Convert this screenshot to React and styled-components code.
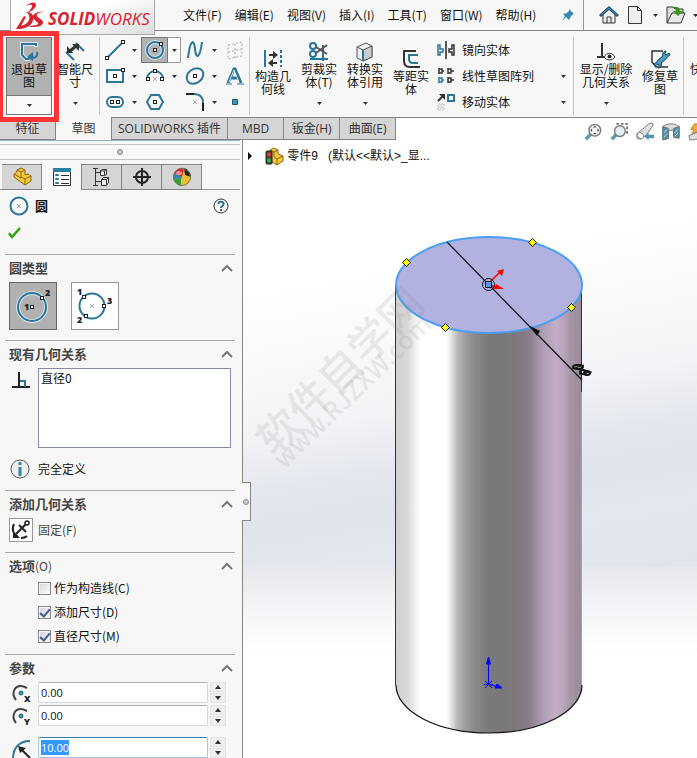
import { useEffect, useRef } from "react";
import styled, { createGlobalStyle, css } from "styled-components";

const GlobalStyle = createGlobalStyle`
    * { box-sizing: border-box; }
    body {
        margin: 0;
        overflow: hidden;
        background: #fff;
        color: #111;
        font: 12px/16px "Noto Sans CJK SC", sans-serif;
    }
    button, input, select { font: inherit; color: inherit; }
    button { padding: 0; border: 0; background: none; }
    svg { display: block; flex: none; overflow: visible; }
    ::selection { background: #3399ff; color: #fff; }
`

const BLUE = "#2b7599";
const DARK = "#333";

/* ---------- shell ---------- */

const Page = styled.div`
    position: relative;
    display: flex;
    flex-direction: column;
    height: 100vh;
    overflow: hidden;
`

const MenuBar = styled.header`
    display: flex;
    flex: none;
    align-items: center;
    height: 31px;
    padding-left: 10px;
    background: #f7f7f7;
    border-bottom: 1px solid #858585;
`

const Logo = styled.div`
    position: relative;
    z-index: 2;
    display: flex;
    flex: none;
    align-self: flex-start;
    align-items: center;
    width: 145px;
    height: 35px;
    padding: 0 0 2px 5px;
    color: #d9232e;
    font: italic 400 17px/24px "Open Sans", sans-serif;
    background: linear-gradient(160deg, #fff 45%, #dcdcdc);
    border: 1px solid #aaa;
    border-top: 0;

    b { font-weight: 700; }
    span { padding-top: 5px; }
`

const Menus = styled.nav`
    display: flex;
    flex: 1;
    gap: 13px;
    padding-left: 28px;
    white-space: nowrap;
`

const QuickTools = styled.div`
    display: flex;
    flex: none;
    align-items: center;
    width: 138px;
    height: 30px;
`

const QuickDivider = styled.div`
    width: 3px;
    height: 30px;
    margin: 0 15px 0 6px;
    background: #d0d0d0;
    border-left: 1px solid #999;
`

const QuickButton = styled.button`
    display: grid;
    flex: none;
    place-items: center;
    width: ${p => p.$width}px;
    height: 24px;
`

/* ---------- ribbon ---------- */

const Ribbon = styled.section`
    display: flex;
    flex: none;
    height: 86px;
    padding: 6px 0 2px 6px;
    background: #f7f7f7;
`

const Separator = styled.div`
    flex: none;
    width: 1px;
    margin: 0 ${p => p.$after || 0}px 0 1px;
    background: #c4c4c4;
`

const BigButton = styled.button`
    display: flex;
    flex: none;
    flex-direction: column;
    align-items: center;
    width: ${p => p.$width || 46}px;
    height: 78px;
    padding-top: ${p => (p.$menu ? 5 : 12)}px;
    line-height: 13px;
    white-space: nowrap;

    svg:last-child { margin-top: ${p => (p.$menu ? 14 : 0)}px; }
`

const ExitGroup = styled.div`
    display: flex;
    flex: none;
    flex-direction: column;
    width: 46px;
    height: 78px;
    border: 1px solid #777;
`

const ExitButton = styled.button`
    display: flex;
    flex-direction: column;
    align-items: center;
    height: 57px;
    padding-top: 4px;
    line-height: 13px;
    background: #b1b1b1;
`

const ExitMenu = styled.button`
    display: grid;
    flex: 1;
    place-items: center;
    background: #f9f9f9;
    border-top: 1px solid #777;
`

const ToolGrid = styled.div`
    display: grid;
    flex: none;
    grid-template-columns: 40px 40px 40px 27px;
    grid-auto-rows: 26px;
    padding-left: 1px;
`

const ToolCell = styled.div`
    display: flex;
    ${p => p.$active && css`
        button:first-child { background: #b1b1b1; border: 1px solid #777; }
        button:last-child { background: #fff; border: 1px solid #999; border-left: 0; }
    `}
`

const ToolButton = styled.button`
    display: grid;
    place-items: center;
    width: ${p => (p.$caret ? 13 : 27)}px;
    height: 26px;
`

const SideList = styled.div`
    flex: none;
    width: 138px;
`

const SideRow = styled.div`
    display: flex;
    align-items: center;
    height: 26px;

    button:first-child {
        display: flex;
        flex: 1;
        gap: 7px;
        align-items: center;
        padding-left: 3px;
        white-space: nowrap;
    }
    button:last-child:not(:first-child) { padding: 4px 6px; }
`

/* frame that calls out the exit-sketch command */
const Highlight = styled.div`
    position: absolute;
    z-index: 3;
    top: 31px;
    left: -2px;
    width: 61px;
    height: 91px;
    border: 5px solid #ff3434;
    pointer-events: none;
`

const TabStrip = styled.div`
    display: flex;
    flex: none;
    height: 23px;
`

const Tab = styled.button`
    flex: none;
    min-width: 56px;
    padding: 0 6px;
    color: #333;
    font-family: "Open Sans", "Noto Sans CJK SC", sans-serif;
    background: ${p => (p.$active ? "#f7f7f7" : "#d5d5d5")};
    border: solid #858585;
    border-width: ${p => (p.$active ? "0 1px 0 0" : "1px 1px 1px 0")};
`

const StripRest = styled.div`
    flex: 1;
    border-top: 1px solid #858585;
`

/* ---------- property panel ---------- */

const Body = styled.main`
    display: flex;
    flex: 1;
    min-height: 0;
`

const Panel = styled.aside`
    position: relative;
    z-index: 1;
    flex: none;
    width: 243px;
    background: #f7f7f7;
    border-right: 1px solid #858585;
`

const PanelGrip = styled.div`
    display: grid;
    place-items: center;
    height: 20px;
    margin-right: 2px;
    padding-top: 4px;
    border-top: 1px solid #8fb0bd;
    border-bottom: 1px solid #c4c4c4;
    background: linear-gradient(#c4c4c4, #c4c4c4) 0 3px / 100% 1px no-repeat;
`

const Knob = styled.i`
    width: 6px;
    height: 6px;
    background: #ccc;
    border: 1px solid #888;
    border-radius: 50%;
`

const SideHandle = styled.button`
    position: absolute;
    top: 342px;
    right: -9px;
    display: grid;
    place-items: center;
    width: 9px;
    height: 39px;
    background: #f7f7f7;
    border: 1px solid #858585;
    border-left: 0;
`

const PanelTabs = styled.div`
    display: flex;
    height: 26px;
    margin: 4px 2px 0 0;
    padding-left: 2px;
    background: linear-gradient(#999, #999) 0 100% / 100% 1px no-repeat;
`

const PanelTab = styled.button`
    display: grid;
    place-items: center;
    width: 40px;
    background: ${p => (p.$active ? "#f7f7f7" : "#d5d5d5")};
    border: solid #858585;
    border-width: ${p => (p.$active ? "0 1px 0 0" : "1px 1px 1px 0")};
`

const TitleRow = styled.div`
    display: flex;
    align-items: center;
    gap: 6px;
    height: 32px;
    padding: 0 13px 0 9px;

    h1 { flex: 1; margin: 0; font-size: 13px; font-weight: 700; }
`

const ConfirmRow = styled.div`
    height: 32px;
    padding: 4px 7px;
`

const Block = styled.section`
    margin: 0 7px 0 5px;
    padding: 0 2px 10px 4px;
    border-top: 1px solid #aaa;
`

const BlockHead = styled.div`
    display: flex;
    align-items: center;
    justify-content: space-between;
    height: 27px;
    padding-bottom: 2px;

    h2 { margin: 0; color: #444; font-size: 13px; font-weight: 700; }
    small { font-size: 12px; font-weight: 400; }
`

const TypeRow = styled.div`
    display: flex;
    gap: 14px;
`

const TypeButton = styled.button`
    display: grid;
    place-items: center;
    width: 48px;
    height: 48px;
    background: ${p => (p.$active ? "#b1b1b1" : "#fff")};
    border: 1px solid ${p => (p.$active ? "#666" : "#999")};
`

const RelationRow = styled.div`
    display: grid;
    grid-template-columns: 29px 193px;
    align-items: start;

    svg { margin: 3px 0 0 3px; }
`

const RelationList = styled.select`
    height: 80px;
    padding: 0 2px;
    overflow: hidden;
    background: #fff;
    border: 1px solid #828aa8;
    border-radius: 0;
    outline: 0;

    option { padding: 0; min-height: 0; line-height: 16px; }
`

const StatusRow = styled.div`
    display: flex;
    align-items: center;
    gap: 8px;
    height: 22px;
    margin-top: 10px;
    padding-left: 1px;
`

const FixRow = styled.label`
    display: flex;
    align-items: center;
    gap: 5px;
    height: 24px;
    color: #444;
`

const FixButton = styled.button`
    display: grid;
    place-items: center;
    width: 24px;
    height: 24px;
    background: #fff;
    border: 1px solid #999;
`

const Options = styled.div`
    display: grid;
    gap: 8px;
    padding-left: 29px;
`

const Option = styled.label`
    display: flex;
    align-items: center;
    gap: 3px;
    height: 16px;
`

const Check = styled.input.attrs({ type: "checkbox" })`
    display: grid;
    place-items: center;
    width: 13px;
    height: 13px;
    margin: 0;
    appearance: none;
    background: linear-gradient(135deg, #cfd3d8, #fff);
    border: 1px solid #8a8a8a;
    box-shadow: inset 0 0 0 1px #f4f4f4;

    &:checked::after {
        content: "";
        width: 4px;
        height: 8px;
        margin-bottom: 2px;
        border: solid #435a9c;
        border-width: 0 2px 2px 0;
        transform: rotate(40deg);
    }
`

const Fields = styled.div`
    display: grid;
    gap: 2px;
`

const FieldRow = styled.div`
    display: flex;
    height: 21px;
    margin-top: ${p => (p.$spaced ? 9 : 0)}px;

    label { width: 29px; padding: 2px 0 0 3px; }
`

const FieldInput = styled.input`
    width: 170px;
    height: 21px;
    padding: 0 2px 1px;
    font-family: "Open Sans", sans-serif;
    font-size: 11px;
    line-height: 14px;
    background: #fff;
    border: 1px solid #d3d8e0;
    border-top-color: #a9abb5;
    border-radius: 2px;
    outline: 0;

    &:focus {
        border-color: #9fc8e6;
        border-top-color: #3d7bad;
    }
`

const Spinner = styled.div`
    display: grid;
    gap: 1px;
    width: 16px;
    margin-left: 2px;

    button {
        display: grid;
        place-items: center;
        background: #efefef;
        border: 1px solid #e3e3e3;
    }
`

/* ---------- viewport ---------- */

const Viewport = styled.section`
    position: relative;
    flex: 1;
    min-width: 0;
    background:
        linear-gradient(170deg, #fff 30%, #fafafc 43%, #f2f3f6 59%, #e4e7ef 70%, #dfe3ec 78%, #e3e7f0 86%, #e0e4ed) 0 0 / 100% 69% no-repeat,
        linear-gradient(#fff 69%, #e5e8ef 69%, #ebebef 71%, #f3f5f8 76%, #fff 83%);
`

const FeatureTree = styled.div`
    position: absolute;
    top: 7px;
    left: 4px;
    display: flex;
    align-items: center;
    height: 18px;
    font-family: "Liberation Sans", "Noto Sans CJK SC", sans-serif;
    white-space: pre;
`

const HeadsUp = styled.div`
    position: absolute;
    top: -17px;
    right: -9px;
    display: flex;
    gap: 8px;
`

const Canvas = styled.svg`
    width: 100%;
    height: 100%;
`

const Watermark = styled.g`
    fill: #8a8a8a;
    fill-opacity: 0.18;
    font-family: "Noto Sans CJK SC", sans-serif;
    font-weight: 500;
`

/* ---------- icons ---------- */

const Icon = ({ w = 20, h = 20, children, ...rest }) => (
    <svg width={w} height={h} viewBox={`0 0 ${w} ${h}`} fill="none" stroke={DARK} strokeWidth="2" aria-hidden="true" {...rest}>
        {children}
    </svg>
)

const Caret = () => (
    <Icon w={5} h={3}><path d="M0 0h5L2.500 3z" fill={DARK} stroke="none" /></Icon>
)

const Dot = ({ x, y }) => (
    <rect x={x - 1.5} y={y - 1.5} width="3" height="3" fill="#fff" stroke="#222" strokeWidth="1" />
)

const Cross = ({ x, y }) => (
    <path d={`M${x - 2} ${y - 2}l4 4m0-4l-4 4`} stroke="#aaa" strokeWidth="1" />
)

const LogoMark = () => (
    <Icon w={32} h={30} fill="#d9232e" stroke="none">
        <path d="M10 5C14 1 20 0 20 4c0 3-4 6-9 8 3-3 5-5 5-7s-3-1-6 0z" />
        <path d="M10 11c8 0 9 6 6 11-3 4-8 6-16 6l8-13 2 1-5 9c4-1 7-3 8-6 1-4 0-6-3-8z" />
        <path d="M29 11c-6 0-9 2-8 4s7 4 6 7c-1 4-7 4-14 4 1-2 8-1 9-3s-6-4-5-8c1-3 6-5 12-4z" />
    </Icon>
)

const IconExit = () => (
    <Icon>
        <path d="M17 5V2H3v11l4 4h3" stroke="#dceaf1" strokeWidth="4" />
        <path d="M17 4V2H3v11l4 4h3" stroke={BLUE} />
        <path d="M18 10c1 5-2 6-7 6" stroke={BLUE} />
        <path d="M8 15l6-5v9z" fill={BLUE} stroke="none" />
    </Icon>
)

const IconDimension = () => (
    <Icon>
        <path d="M1 10l8 8M11 1l8 8" stroke={BLUE} />
        <path d="M5 9l6-5" strokeWidth="3" />
        <path d="M2 11V4l6 7zM7 2h7v7z" fill={DARK} stroke="none" />
    </Icon>
)

const IconLine = () => (
    <Icon><path d="M2 18L18 2" stroke={BLUE} /><Dot x={2} y={18} /><Dot x={18} y={2} /></Icon>
)

const IconCircle = () => (
    <Icon>
        <circle cx="10" cy="10" r="8" stroke="#d5e6ee" strokeWidth="4" />
        <circle cx="10" cy="10" r="8" stroke={BLUE} />
        <Dot x={10} y={10} /><Dot x={16} y={4} />
    </Icon>
)

const IconSpline = () => (
    <Icon><path d="M3 18C5 0 9-2 10 9s5 9 7-7" stroke={BLUE} /></Icon>
)

const IconPlane = () => (
    <Icon stroke="#aaa" strokeWidth="1"><path d="M3 5l14-3v14L3 19zM3 12l14-3M10 4v14" strokeDasharray="2 2" /></Icon>
)

const IconRect = () => (
    <Icon><path d="M2 4h16v12H2z" stroke={BLUE} /><Dot x={10} y={10} /><Dot x={18} y={4} /></Icon>
)

const IconArc = () => (
    <Icon><path d="M2 13a8 8 0 0 1 16 0" stroke={BLUE} /><Cross x={10} y={13} /><Dot x={3} y={13} /><Dot x={17} y={13} /><Dot x={10} y={5} /></Icon>
)

const IconEllipse = () => (
    <Icon><ellipse cx="10" cy="10" rx="9" ry="7" transform="rotate(-38 10 10)" stroke={BLUE} /><Dot x={10} y={10} /></Icon>
)

const IconText = () => (
    <Icon>
        <path d="M3 17L9 3h1l6 14M6 12h7" stroke={BLUE} strokeWidth="3" />
        <path d="M4 16L9 4l5 12" stroke="#d5e6ee" strokeWidth="1" />
        <path d="M1 18h6M12 18h7" stroke={BLUE} strokeWidth="1" />
    </Icon>
)

const IconSlot = () => (
    <Icon><rect x="2" y="5" width="16" height="10" rx="5" stroke={BLUE} /><Dot x={7} y={10} /><Dot x={13} y={10} /></Icon>
)

const IconPolygon = () => (
    <Icon><path d="M6 3h8l4 7-4 7H6l-4-7z" stroke={BLUE} /><Dot x={10} y={10} /></Icon>
)

const IconFillet = () => (
    <Icon>
        <path d="M1 2h9M18 11v8" stroke="#222" /><path d="M9 2c6 0 9 3 9 9" stroke={BLUE} /><Cross x={10} y={10} />
    </Icon>
)

const IconPoint = () => (
    <Icon><path d="M7.500 7.500h5v5h-5z" fill="#2f9abf" stroke="#24566f" strokeWidth="1" /></Icon>
)

const IconConstruct = () => (
    <Icon>
        <path d="M2 1v17" stroke={BLUE} /><path d="M18 1v17" stroke={BLUE} strokeDasharray="3 2" />
        <path d="M6 6h5M9 14h5" /><path d="M10 2l5 4-5 4zM10 10l-5 4 5 4z" fill={DARK} stroke="none" />
    </Icon>
)

const IconTrim = () => (
    <Icon>
        <path d="M1 17h18M14 3v16" stroke={BLUE} />
        <circle cx="4" cy="4" r="3" stroke={BLUE} /><circle cx="4" cy="12" r="3" stroke={BLUE} />
        <path d="M7 5l11 7M7 11l11-8" stroke="#555" strokeWidth="2" />
    </Icon>
)

const IconConvert = () => (
    <Icon strokeWidth="1">
        <path d="M2 5l9-4 6 3v11l-9 4-6-3z" fill="#eee" stroke="#555" />
        <path d="M8 8l9-4v11l-9 4z" fill="#ccc" stroke="#555" />
        <path d="M2 5l6 3" stroke="#555" /><path d="M8 8v11" stroke={BLUE} strokeWidth="2" />
    </Icon>
)

const IconOffset = () => (
    <Icon><path d="M15 2H3v10c0 4 2 6 6 6h10" /><path d="M17 6H8v4c0 3 1 4 4 4h5" stroke={BLUE} /></Icon>
)

const IconMirror = () => (
    <Icon w={18} h={18} strokeWidth="1.500">
        <path d="M9 0v18" stroke="#222" /><path d="M1 4v10h2v-3h3V8H3V4z" stroke={BLUE} /><path d="M17 4v10h-2v-3h-3V8h3V4z" />
    </Icon>
)

const IconPattern = () => (
    <Icon w={18} h={18} strokeWidth="1.500">
        <path d="M2 1v6M2 2h3v4H2M5 4h2M11 1v6M11 2h3v4h-3M14 4h3" />
        <path d="M2 10v6M2 11h3v4H2M5 13h2" stroke={BLUE} /><path d="M11 10v6M11 11h3v4h-3M14 13h3" />
    </Icon>
)

const IconMove = () => (
    <Icon w={18} h={18}>
        <path d="M1 8l5-5" /><path d="M2 1h6v6z" fill={DARK} stroke="none" />
        <path d="M11 2h6v6h-6z" stroke={BLUE} /><path d="M1 11h6v6H1zM4 11v6M1 14h6" stroke="#bbb" strokeWidth="1" strokeDasharray="2 1" />
    </Icon>
)

const IconRelations = () => (
    <Icon>
        <path d="M6 1v14M1 15h9" />
        <path d="M8 15c3-5 8-5 11 0-3 4-8 4-11 0z" fill="#fff" strokeWidth="1" /><circle cx="13.500" cy="14.500" r="2" fill="#222" stroke="none" />
    </Icon>
)

const IconRepair = () => (
    <Icon>
        <path d="M13 2H2v11l4 5h12" strokeWidth="1.500" />
        <path d="M8 14l8-7" stroke="#1f4f68" strokeWidth="5" />
        <path d="M15 2c-4 2-3 7 1 7l4-3-1-2-3 2-1-1 1-3zM9 19c4-2 3-7-1-7l-4 3 1 2 3-2 1 1-1 3z" fill="#3f90b6" stroke="#1f4f68" strokeWidth="1" />
        <path d="M8 14l8-7" stroke="#4ba0c7" strokeWidth="3" />
    </Icon>
)

const IconPin = () => (
    <Icon w={14} h={14}><path d="M8 1l5 5-2 1-2 3-1 2-3-3-4 4 3-5-2-2 4-1 2-2z" fill="#3289b4" stroke="none" /></Icon>
)

const IconHome = () => (
    <Icon>
        <path d="M4 9v9h12V9l-6-6z" fill="#eee" strokeWidth="1" /><path d="M8 18v-6h4v6" strokeWidth="1" />
        <path d="M1 11l9-8 9 8" stroke="#234d63" strokeWidth="3" /><path d="M2 10l8-7 8 7" stroke="#4c9cc0" strokeWidth="1" />
    </Icon>
)

const IconNew = () => (
    <Icon w={14} h={18} strokeWidth="1"><path d="M.5.5h9l4 4v13H.5z" fill="#eee" /><path d="M9.500.5v4h4" /></Icon>
)

const IconOpen = () => (
    <Icon strokeWidth="1">
        <path d="M1 18V2h6l2 2h8v4" fill="#ddd" /><path d="M1 18L6 8h13l-4 10z" fill="#e8e8e8" />
        <path d="M6 2c5-1 8 0 8 4h3l-5 5-5-5h3c0-2-1-3-4-4z" fill="#3c9a0c" stroke="none" />
    </Icon>
)

const IconPart = () => (
    <Icon strokeWidth="1" stroke="#8a6512">
        <path d="M5 3l4-2 4 2v5l3-1 3 2v5l-6 4L2 10V7l3-2z" fill="#f6c93c" />
        <path d="M5 3l4 2 4-2M9 5v5l4 2 6-3M13 12v6M2 7l7 4" />
    </Icon>
)

const IconProps = () => (
    <Icon strokeWidth="1">
        <path d="M1.500 1.500h17v17h-17z" fill="#fff" /><path d="M1 1h18v4H1z" fill="#2c7da5" stroke="none" />
        <path d="M3.500 7.500h3v1h-3zM3.500 11.500h3v1h-3zM3.500 15.500h3v1h-3z" stroke={BLUE} />
        <path d="M9 8.500h8M9 12.500h8M9 16.500h8" />
    </Icon>
)

const IconConfig = () => (
    <Icon strokeWidth="1">
        <path d="M3.500 2v16M1 1.500h5M1 18.500h5M4 5.500h4M4 14.500h5" />
        <path d="M8.500 3.500l2-1h4v5l-2 1h-4zM9.500 12.500l2-2h5v5l-2 3h-5z" fill="#eee" />
        <path d="M8.500 4h4v4M9.500 12.500h5v5M12.500 4l2-2M14.500 12.500l2-2" />
    </Icon>
)

const IconTarget = () => (
    <Icon stroke="#222"><circle cx="10" cy="10" r="6" /><path d="M10 1v18M1 10h18" /></Icon>
)

const IconBall = () => (
    <Icon stroke="none">
        <circle cx="10" cy="10" r="9" fill="#e8c12c" />
        <path d="M10 10L2 6A9 9 0 0 1 12 1z" fill="#d92020" /><path d="M2 6a9 9 0 0 0-1 5l8 1 1-2z" fill="#2f80bd" />
        <path d="M1 11c1 4 4 7 8 8V12z" fill="#36a037" /><path d="M12 1c4 1 7 5 7 9l-6-2z" fill="#222" />
        <ellipse cx="7" cy="6" rx="3" ry="2" fill="#fff" fillOpacity="0.5" />
        <circle cx="10" cy="10" r="8.500" stroke="#777" fill="none" strokeWidth="1" />
    </Icon>
)

const IconHelp = () => (
    <Icon w={16} h={16}>
        <circle cx="8" cy="8" r="7" fill="#f5f5f5" strokeWidth="1" />
        <path d="M5.500 6c0-3 5-3 5 0 0 2-2.500 2-2.500 4M8 11v2" stroke={BLUE} />
    </Icon>
)

const IconCheck = () => (
    <Icon w={15} h={14}><path d="M2 7l3 4 8-9" stroke="#35a30a" strokeWidth="2.500" /></Icon>
)

const IconUp = () => (
    <Icon w={12} h={8} stroke="#777"><path d="M1 7l5-5 5 5" /></Icon>
)

const Mark = ({ x, y, children }) => (
    <text x={x} y={y} fontSize="9" fontWeight="800" fontFamily="Open Sans" fill="#222" stroke="none">{children}</text>
)

const IconCenterCircle = () => (
    <Icon w={44} h={44}>
        <circle cx="21" cy="23" r="14" stroke="#d8e7ee" strokeWidth="4" /><circle cx="21" cy="23" r="14" stroke={BLUE} />
        <Dot x={21} y={23} /><Dot x={31} y={14} /><Mark x={13} y={26}>1</Mark><Mark x={34} y={12}>2</Mark>
    </Icon>
)

const IconThreePoint = () => (
    <Icon w={44} h={44}>
        <circle cx="19" cy="22" r="12.500" stroke={BLUE} /><Cross x={19} y={22} />
        <Dot x={11} y={13} /><Dot x={31} y={22} /><Dot x={13} y={32} />
        <Mark x={4} y={11}>1</Mark><Mark x={4} y={39}>2</Mark><Mark x={34} y={20}>3</Mark>
    </Icon>
)

const IconPerp = () => (
    <Icon w={18} h={18}><path d="M7 1v15M0 16h18" stroke="#222" /><path d="M8 10h5v6" stroke={BLUE} /></Icon>
)

const IconInfo = () => (
    <Icon><circle cx="10" cy="10" r="9" fill="#eee" stroke="#555" strokeWidth="1" /><path d="M10 3v3M10 8v9" stroke="#2e86ad" strokeWidth="3" /></Icon>
)

const IconAnchor = () => (
    <Icon stroke="#222">
        <path d="M5 14L15 4M8 5l7 7" /><circle cx="16" cy="3" r="2" strokeWidth="1.500" />
        <path d="M3 4C0 10 3 15 7 17M10 18c2 0 4 0 6-2" /><path d="M2 11v7h7z" fill="#222" stroke="none" />
    </Icon>
)

const IconAxis = ({ axis }) => (
    <Icon>
        <path d="M4 16C-1 10 2 2 9 2c2 0 4 1 6 2" stroke="#444" /><circle cx="9" cy="9" r="2" fill="#2e9bc0" stroke="#24566f" strokeWidth="1" />
        <text x="12" y="18" fontSize="9" fontWeight="800" fontFamily="Open Sans" fill="#222" stroke="none">{axis}</text>
    </Icon>
)

const IconRadius = () => (
    <Icon><path d="M1 20C1 9 7 2 18 2" stroke={BLUE} /><path d="M8 9l10 10" stroke="#222" /><path d="M6 7l8 2-6 5z" fill="#222" stroke="none" /></Icon>
)

const IconTreePart = () => (
    <Icon w={19} h={18} strokeWidth="1" stroke="#8a6512">
        <path d="M5 3l4-2 4 2v4l5 2v5l-6 4-5-3z" fill="#f6c93c" /><path d="M5 3l4 2 4-2M9 5v5l3 2 6-3M12 12v6" />
        <rect x="1" y="4" width="6" height="13" rx="1" fill="#444" stroke="#222" />
        <circle cx="4" cy="7.500" r="2" fill="#e33" stroke="none" /><circle cx="4" cy="13.500" r="2" fill="#3b4" stroke="none" />
    </Icon>
)

const IconZoomFit = () => (
    <Icon w={18} h={18} viewBox="0 0 20 20" stroke="#777">
        <path d="M2 18l6-6" stroke="#5b9ab8" strokeWidth="4" /><circle cx="12" cy="8" r="6.500" fill="#f2f5f7" strokeWidth="1.500" />
        <path d="M12 3l2 2h-4zM12 13l2-2h-4zM7 8l2-2v4zM17 8l-2-2v4z" fill="#444" stroke="none" />
    </Icon>
)

const IconZoomArea = () => (
    <Icon w={18} h={18} viewBox="0 0 20 20" stroke="#777">
        <path d="M7 1h12v13" stroke="#444" strokeWidth="1.500" strokeDasharray="3 2" />
        <path d="M2 18l6-6" stroke="#5b9ab8" strokeWidth="4" /><circle cx="11" cy="9" r="6" fill="#e6eef2" strokeWidth="1.500" />
    </Icon>
)

const IconPrevious = () => (
    <Icon w={18} h={18} viewBox="0 0 20 20" stroke="#777" strokeWidth="1">
        <path d="M1 12L14 1l4-1 1 3-8 11-6 4-4-1z" fill="#ddd" /><ellipse cx="5" cy="14" rx="4" ry="3" fill="#fff" transform="rotate(40 5 14)" />
        <path d="M9 15l5-4v2h6v4h-6v2z" fill="#4c94b7" stroke="none" />
    </Icon>
)

const IconSection = () => (
    <Icon w={18} h={18} viewBox="0 0 20 20" stroke="#666" strokeWidth="1">
        <path d="M1 4c4-4 14-4 18 0v11l-6-1V8H7v9l-6 1z" fill="#ddd" />
        <path d="M1 4l6 2v11l-6 2zM13 6l6-2v13l-6-1z" fill="#4f94b5" /><path d="M2 11l4-4M2 16l4-4M14 11l4-4M14 15l4-4" stroke="#cde" />
    </Icon>
)

const IconDisplay = () => (
    <Icon w={18} h={18} viewBox="0 0 20 20" strokeWidth="1" stroke="#777">
        <path d="M7 1h9l-5 6h4L4 13l3-6H3z" fill="#f3ab33" stroke="#c27c13" /><path d="M1 14l10-4 5 3-6 5-8 1z" fill="#ddd" />
    </Icon>
)

/* ---------- data ---------- */

const menus = ["文件(F)", "编辑(E)", "视图(V)", "插入(I)", "工具(T)", "窗口(W)", "帮助(H)"];
const tabs = ["特征", "草图", "SOLIDWORKS 插件", "MBD", "钣金(H)", "曲面(E)"];
const panelTabs = [
    { name: "特征树", icon: <IconPart /> },
    { name: "属性", icon: <IconProps /> },
    { name: "配置", icon: <IconConfig /> },
    { name: "尺寸专家", icon: <IconTarget /> },
    { name: "外观", icon: <IconBall /> }
];
const tools = [
    { name: "直线", icon: <IconLine />, menu: true },
    { name: "圆", icon: <IconCircle />, menu: true, active: true },
    { name: "样条曲线", icon: <IconSpline />, menu: true },
    { name: "基准面", icon: <IconPlane /> },
    { name: "矩形", icon: <IconRect />, menu: true },
    { name: "圆弧", icon: <IconArc />, menu: true },
    { name: "椭圆", icon: <IconEllipse />, menu: true },
    { name: "文字", icon: <IconText /> },
    { name: "槽口", icon: <IconSlot />, menu: true },
    { name: "多边形", icon: <IconPolygon /> },
    { name: "圆角", icon: <IconFillet />, menu: true },
    { name: "点", icon: <IconPoint /> }
];
const sideTools = [
    { name: "镜向实体", icon: <IconMirror /> },
    { name: "线性草图阵列", icon: <IconPattern />, menu: true },
    { name: "移动实体", icon: <IconMove />, menu: true }
];
const options = [
    { id: "construction", label: "作为构造线(C)" },
    { id: "add-dim", label: "添加尺寸(D)", checked: true },
    { id: "dia-dim", label: "直径尺寸(M)", checked: true }
];
const bodyStops = [
    [0, "#d0d0d0"], [6, "#d8d8d8"], [13, "#fff"], [27, "#fff"], [30, "#e0e0dd"], [33, "#b8b8b8"],
    [38, "#9a9a9a"], [43, "#888"], [49, "#7a7a7a"], [58, "#7a777a"], [67, "#817a80"], [72, "#8b7e8c"],
    [77, "#a595a8"], [81, "#b5a3b9"], [86, "#c3acc5"], [89, "#bda8c0"], [94, "#a595a8"], [100, "#998b99"]
];
const handles = [[406, 262], [532, 242], [571, 307], [445, 327]];

/* ---------- parts ---------- */

const RibbonCommand = ({ icon, lines, menu, width }) => (
    <BigButton $menu={menu} $width={width}>
        {icon}
        <span>{lines[0]}<br />{lines[1]}</span>
        {menu && <Caret />}
    </BigButton>
)

const PanelBlock = ({ title, hint, children }) => (
    <Block>
        <BlockHead>
            <h2>{title}{hint && <small>{hint}</small>}</h2>
            <button aria-label={`折叠${title}`}><IconUp /></button>
        </BlockHead>
        {children}
    </Block>
)

const NumberField = ({ id, name, icon, value, spaced, inputRef }) => (
    <FieldRow $spaced={spaced}>
        <label htmlFor={id} aria-label={name}>{icon}</label>
        <FieldInput id={id} ref={inputRef} defaultValue={value} />
        <Spinner>
            <button aria-label="增加"><Icon w={6} h={4}><path d="M0 4h6L3 0z" fill={DARK} stroke="none" /></Icon></button>
            <button aria-label="减少"><Icon w={6} h={4}><path d="M0 0h6L3 4z" fill={DARK} stroke="none" /></Icon></button>
        </Spinner>
    </FieldRow>
)

const Model = () => (
    <Canvas viewBox="243 140 454 618" role="img" aria-label="圆柱模型">
        <defs>
            <linearGradient id="metal">
                {bodyStops.map(([at, color]) => <stop key={at} offset={`${at}%`} stopColor={color} />)}
            </linearGradient>
        </defs>
        <path d="M396 285V685A93 48 0 0 0 582 685V285z" fill="url(#metal)" />
        <path d="M395.500 285V685M581.500 285V392" stroke="#333" />
        <path d="M581.500 392V685" stroke="#aaa0aa" />
        <path d="M396 685A93 48 0 0 0 582 685" fill="none" stroke="#111" strokeWidth="1.200" />
        <ellipse cx="489" cy="285" rx="93" ry="48" fill="#b1b2e0" stroke="#4a9ff0" strokeWidth="2" />
        <Watermark>
            <text x="275" y="458" fontSize="43" transform="rotate(-45 275 458)">软件自学网</text>
            <text x="284" y="470" fontSize="25" transform="rotate(-44 284 470)">www.RJZXW.com</text>
        </Watermark>
        <path d="M447 242L582 380" stroke="#111" strokeWidth="1.200" />
        <path d="M530 326l10 5-3 5z" fill="#111" />
        <g fill="none" stroke="#111" strokeWidth="2">
            <ellipse cx="578" cy="367" rx="5" ry="2" /><path d="M572 369l12-4" strokeWidth="1" />
            <ellipse cx="583" cy="372" rx="3" ry="2" /><ellipse cx="587" cy="373" rx="3" ry="2" />
            <path d="M579 374l13-2" strokeWidth="1" />
        </g>
        <path d="M488 284l13-13M489 285l10 3" stroke="red" strokeWidth="1.500" />
        <path d="M504 269l-2 7-5-5zM504 289l-10 0 2-5z" fill="red" />
        <circle cx="488.500" cy="284.500" r="6" fill="none" stroke="#111" />
        <path d="M485.500 281.500h6v6h-6z" fill="#4a9ff0" stroke="#111" />
        {handles.map(([x, y]) => (
            <path key={x} d={`M${x + 0.5} ${y - 3.500}l4 4-4 4-4-4z`} fill="#ff0" stroke="#111" />
        ))}
        <g stroke="#00f" fill="#00f">
            <path d="M488.500 684V662M488 684l10 3M485 681l7 7M492 681l-7 7M484 684.500h9" />
            <path d="M488.500 657l2 7h-4zM502 688h-7l2-4z" />
        </g>
    </Canvas>
)

const App = () => {
    const diameter = useRef(null);

    useEffect(() => {
        diameter.current.focus({ preventScroll: true });
        diameter.current.select();
    }, []);

    return (
        <Page>
            <GlobalStyle />
            <MenuBar>
                <Logo><LogoMark /><span><b>SOLID</b>WORKS</span></Logo>
                <Menus>{menus.map(name => <button key={name}>{name}</button>)}</Menus>
                <QuickTools>
                    <QuickButton $width={18} aria-label="固定"><IconPin /></QuickButton>
                    <QuickDivider />
                    <QuickButton $width={20} aria-label="主页"><IconHome /></QuickButton>
                    <QuickButton $width={32} aria-label="新建"><IconNew /></QuickButton>
                    <QuickButton $width={8} aria-label="新建选项"><Caret /></QuickButton>
                    <QuickButton $width={34} aria-label="打开"><IconOpen /></QuickButton>
                    <QuickButton $width={5} aria-label="打开选项"><Caret /></QuickButton>
                </QuickTools>
            </MenuBar>

            <Ribbon>
                <ExitGroup>
                    <ExitButton><IconExit /><span>退出草<br />图</span></ExitButton>
                    <ExitMenu aria-label="退出草图选项"><Caret /></ExitMenu>
                </ExitGroup>
                <RibbonCommand menu icon={<IconDimension />} lines={["智能尺", "寸"]} />
                <Separator />
                <ToolGrid>
                    {tools.map(tool => (
                        <ToolCell key={tool.name} $active={tool.active}>
                            <ToolButton aria-label={tool.name}>{tool.icon}</ToolButton>
                            {tool.menu && <ToolButton $caret aria-label={`${tool.name}选项`}><Caret /></ToolButton>}
                        </ToolCell>
                    ))}
                </ToolGrid>
                <Separator />
                <RibbonCommand icon={<IconConstruct />} lines={["构造几", "何线"]} />
                <RibbonCommand menu icon={<IconTrim />} lines={["剪裁实", "体(T)"]} />
                <RibbonCommand menu icon={<IconConvert />} lines={["转换实", "体引用"]} />
                <RibbonCommand icon={<IconOffset />} lines={["等距实", "体"]} />
                <SideList>
                    {sideTools.map(tool => (
                        <SideRow key={tool.name}>
                            <button>{tool.icon}{tool.name}</button>
                            {tool.menu && <button aria-label={`${tool.name}选项`}><Caret /></button>}
                        </SideRow>
                    ))}
                </SideList>
                <Separator />
                <RibbonCommand menu width={64} icon={<IconRelations />} lines={["显示/删除", "几何关系"]} />
                <RibbonCommand width={44} icon={<IconRepair />} lines={["修复草", "图"]} />
                <Separator $after={6} />
                <RibbonCommand menu width={36} icon={<Icon />} lines={["快速捕", "捉"]} />
            </Ribbon>

            <TabStrip>
                {tabs.map(name => <Tab key={name} $active={name === "草图"}>{name}</Tab>)}
                <StripRest />
            </TabStrip>

            <Body>
                <Panel>
                    <PanelGrip><Knob /></PanelGrip>
                    <PanelTabs>
                        {panelTabs.map(tab => (
                            <PanelTab key={tab.name} $active={tab.name === "属性"} aria-label={tab.name}>{tab.icon}</PanelTab>
                        ))}
                    </PanelTabs>
                    <TitleRow>
                        <Icon><circle cx="10" cy="10" r="8.500" stroke={BLUE} /><Cross x={10} y={10} /></Icon>
                        <h1>圆</h1>
                        <button aria-label="帮助"><IconHelp /></button>
                    </TitleRow>
                    <ConfirmRow><button aria-label="确定"><IconCheck /></button></ConfirmRow>

                    <PanelBlock title="圆类型">
                        <TypeRow>
                            <TypeButton $active aria-label="圆"><IconCenterCircle /></TypeButton>
                            <TypeButton aria-label="周边圆"><IconThreePoint /></TypeButton>
                        </TypeRow>
                    </PanelBlock>

                    <PanelBlock title="现有几何关系">
                        <RelationRow>
                            <IconPerp />
                            <RelationList size={4} aria-label="现有几何关系">
                                <option>直径0</option>
                            </RelationList>
                        </RelationRow>
                        <StatusRow><IconInfo />完全定义</StatusRow>
                    </PanelBlock>

                    <PanelBlock title="添加几何关系">
                        <FixRow htmlFor="fix"><FixButton id="fix"><IconAnchor /></FixButton>固定(F)</FixRow>
                    </PanelBlock>

                    <PanelBlock title="选项" hint="(O)">
                        <Options>
                            {options.map(({ id, label, checked }) => (
                                <Option key={id} htmlFor={id}><Check id={id} defaultChecked={checked} />{label}</Option>
                            ))}
                        </Options>
                    </PanelBlock>

                    <PanelBlock title="参数">
                        <Fields>
                            <NumberField id="cx" name="X 坐标" icon={<IconAxis axis="X" />} value="0.00" />
                            <NumberField id="cy" name="Y 坐标" icon={<IconAxis axis="Y" />} value="0.00" />
                            <NumberField id="dia" name="半径" icon={<IconRadius />} value="10.00" spaced inputRef={diameter} />
                        </Fields>
                    </PanelBlock>
                    <SideHandle aria-label="折叠面板"><Knob /></SideHandle>
                </Panel>

                <Viewport>
                    <Model />
                    <FeatureTree>
                        <Icon w={18} h={10}><path d="M1 1v8l4-4z" fill="#111" stroke="none" /></Icon>
                        <IconTreePart />
                        <span>{" 零件9   (默认<<默认>_显..."}</span>
                    </FeatureTree>
                    <HeadsUp>
                        <IconZoomFit />
                        <IconZoomArea />
                        <IconPrevious />
                        <IconSection />
                        <IconDisplay />
                    </HeadsUp>
                </Viewport>
            </Body>
            <Highlight />
        </Page>
    )
}

export default App;
